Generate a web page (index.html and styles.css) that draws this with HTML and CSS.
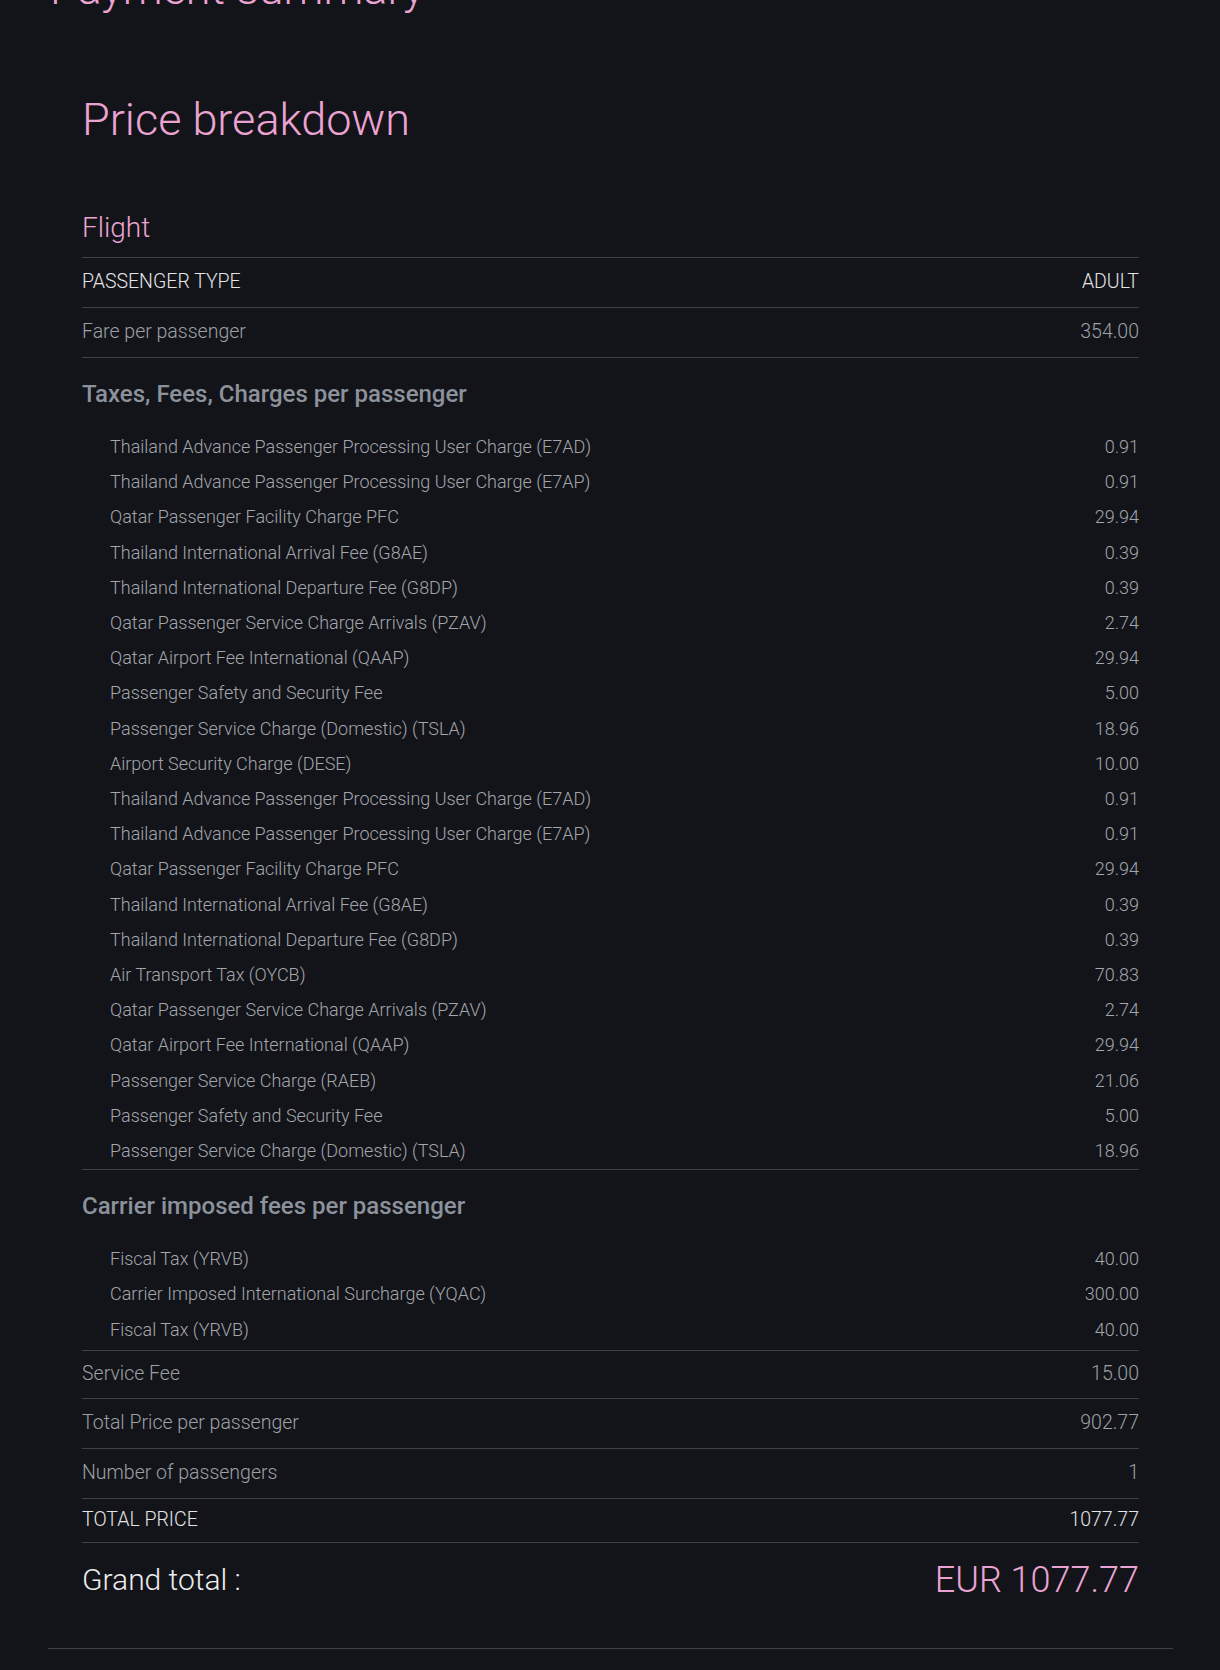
FILE: index.html
```html
<!DOCTYPE html>
<html lang="en">
<head>
    <meta charset="UTF-8">
    <title>Payment summary</title>
    <link rel="stylesheet" href="styles.css">
</head>
<body>
    <div class="resumen">
        <h1 class="titulo-pagina">Payment summary</h1>

        <section class="desglose">
            <h2>Price breakdown</h2>
            <h3>Flight</h3>

            <div class="fila fila-cabecera">
                <span>PASSENGER TYPE</span>
                <span>ADULT</span>
            </div>
            <div class="fila">
                <span>Fare per passenger</span>
                <span>354.00</span>
            </div>

            <div class="grupo">
                <h4>Taxes, Fees, Charges per passenger</h4>
                <ul class="conceptos">
                    <li><span>Thailand Advance Passenger Processing User Charge (E7AD)</span><span>0.91</span></li>
                    <li><span>Thailand Advance Passenger Processing User Charge (E7AP)</span><span>0.91</span></li>
                    <li><span>Qatar Passenger Facility Charge PFC</span><span>29.94</span></li>
                    <li><span>Thailand International Arrival Fee (G8AE)</span><span>0.39</span></li>
                    <li><span>Thailand International Departure Fee (G8DP)</span><span>0.39</span></li>
                    <li><span>Qatar Passenger Service Charge Arrivals (PZAV)</span><span>2.74</span></li>
                    <li><span>Qatar Airport Fee International (QAAP)</span><span>29.94</span></li>
                    <li><span>Passenger Safety and Security Fee</span><span>5.00</span></li>
                    <li><span>Passenger Service Charge (Domestic) (TSLA)</span><span>18.96</span></li>
                    <li><span>Airport Security Charge (DESE)</span><span>10.00</span></li>
                    <li><span>Thailand Advance Passenger Processing User Charge (E7AD)</span><span>0.91</span></li>
                    <li><span>Thailand Advance Passenger Processing User Charge (E7AP)</span><span>0.91</span></li>
                    <li><span>Qatar Passenger Facility Charge PFC</span><span>29.94</span></li>
                    <li><span>Thailand International Arrival Fee (G8AE)</span><span>0.39</span></li>
                    <li><span>Thailand International Departure Fee (G8DP)</span><span>0.39</span></li>
                    <li><span>Air Transport Tax (OYCB)</span><span>70.83</span></li>
                    <li><span>Qatar Passenger Service Charge Arrivals (PZAV)</span><span>2.74</span></li>
                    <li><span>Qatar Airport Fee International (QAAP)</span><span>29.94</span></li>
                    <li><span>Passenger Service Charge (RAEB)</span><span>21.06</span></li>
                    <li><span>Passenger Safety and Security Fee</span><span>5.00</span></li>
                    <li><span>Passenger Service Charge (Domestic) (TSLA)</span><span>18.96</span></li>
                </ul>
            </div>

            <div class="grupo">
                <h4>Carrier imposed fees per passenger</h4>
                <ul class="conceptos">
                    <li><span>Fiscal Tax (YRVB)</span><span>40.00</span></li>
                    <li><span>Carrier Imposed International Surcharge (YQAC)</span><span>300.00</span></li>
                    <li><span>Fiscal Tax (YRVB)</span><span>40.00</span></li>
                </ul>
            </div>

            <div class="fila">
                <span>Service Fee</span>
                <span>15.00</span>
            </div>
            <div class="fila">
                <span>Total Price per passenger</span>
                <span>902.77</span>
            </div>
            <div class="fila">
                <span>Number of passengers</span>
                <span>1</span>
            </div>
            <div class="fila fila-total">
                <span>TOTAL PRICE</span>
                <span>1077.77</span>
            </div>

            <div class="gran-total">
                <span class="gran-total-texto">Grand total :</span>
                <span class="gran-total-importe">EUR 1077.77</span>
            </div>
        </section>
    </div>
</body>
</html>
```

FILE: styles.css
```css
body {
    background: #131419;
    font-family: 'Roboto', 'Liberation Sans', sans-serif;
    font-weight: 300;
    margin: 0;
    padding: 0 47px 0 48px;
    color: #9da0a6;
}

.resumen {
    border-bottom: 1px solid #3f4046;
}

.titulo-pagina {
    font-weight: 300;
    font-size: 45px;
    line-height: 54px;
    color: #eba4d2;
    margin: -38px 0 0 2px;
}

.desglose {
    padding: 0 34px 46px 34px;
}

.desglose h2 {
    font-weight: 300;
    font-size: 45px;
    line-height: 52px;
    color: #eba4d2;
    margin: 78px 0 0;
}

.desglose h3 {
    font-weight: 300;
    font-size: 28px;
    line-height: 33px;
    color: #eba4d2;
    margin: 65px 0 13px;
}

.fila {
    display: flex;
    justify-content: space-between;
    border-top: 1px solid #3f4046;
    font-size: 19.5px;
    line-height: 24px;
    padding: 12px 0 13px;
}

.fila-cabecera {
    color: #e4e4e6;
}

.fila-total {
    color: #e4e4e6;
    padding: 9px 0 10px;
    border-bottom: 1px solid #3f4046;
}

.grupo {
    border-top: 1px solid #3f4046;
    padding: 22px 0 1px;
}

.grupo + .fila {
    padding: 11px 0 12px;
}

.grupo h4 {
    font-weight: 500;
    font-size: 24px;
    line-height: 28px;
    color: #8c929b;
    margin: 0 0 21px;
}

.grupo + .grupo {
    padding-bottom: 3px;
}

.conceptos {
    list-style: none;
    margin: 0;
    padding: 0 0 0 28px;
}

.conceptos li {
    display: flex;
    justify-content: space-between;
    font-size: 18px;
    line-height: 35.2px;
    color: #a3a6ac;
}

.gran-total {
    display: flex;
    justify-content: space-between;
    align-items: center;
    padding: 15px 0 0;
}

.gran-total-texto {
    font-size: 30px;
    color: #ececee;
}

.gran-total-importe {
    font-size: 36px;
    line-height: 44px;
    color: #eba4d2;
}
```
